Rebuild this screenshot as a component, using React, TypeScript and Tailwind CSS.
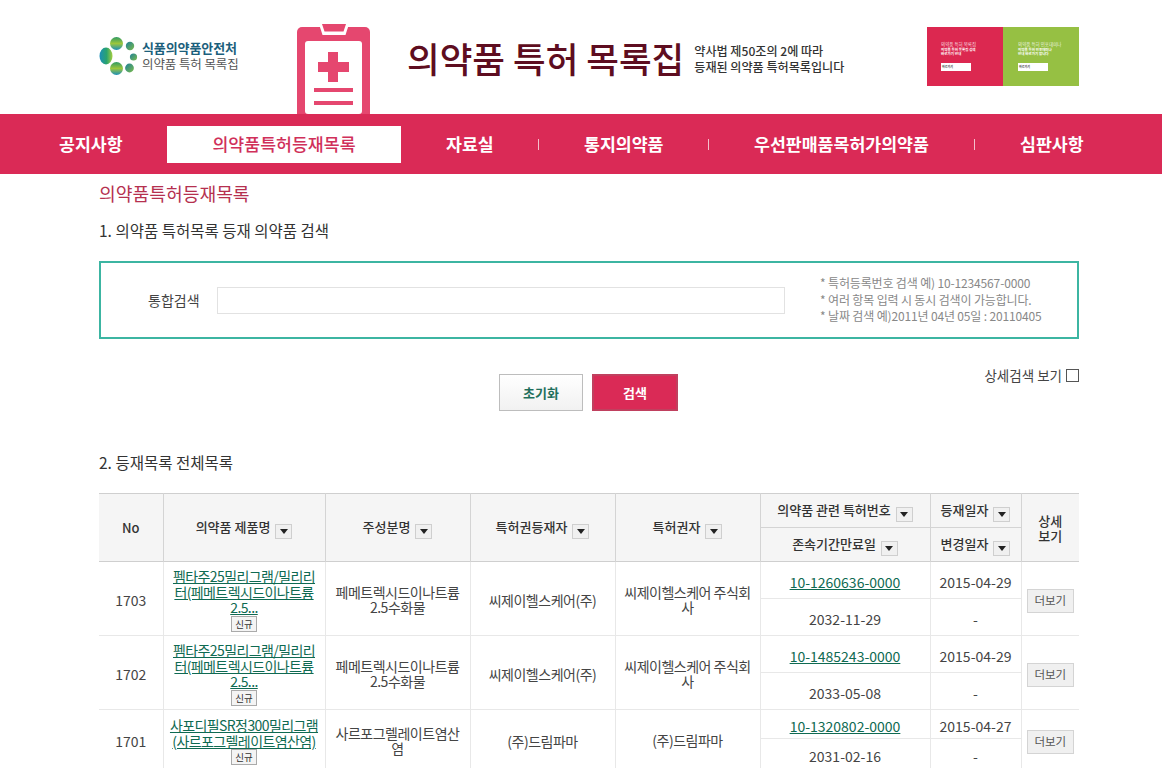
import { type ReactNode } from "react";

// Small square toggle used beside each sortable column title.
function SortBox() {
  return (
    <span className="ml-[5px] inline-flex h-[15px] w-[17px] items-center justify-center border border-[#cfcfcf] bg-[#f0f0f0] align-[-2px]">
      <svg width="8" height="5" viewBox="0 0 8 5" aria-hidden>
        <path d="M0 0h8L4 5z" fill="#222" />
      </svg>
    </span>
  );
}

function Logo() {
  return (
    <svg width="40" height="42" viewBox="0 0 40 42" aria-hidden className="shrink-0">
      <defs>
        <linearGradient id="lg1" x1="0" y1="0" x2="1" y2="0">
          <stop offset="0" stopColor="#1b8fb8" />
          <stop offset="0.55" stopColor="#2aa36d" />
          <stop offset="1" stopColor="#a6cf3f" />
        </linearGradient>
        <linearGradient id="lg2" x1="0" y1="0" x2="0" y2="1">
          <stop offset="0" stopColor="#2f9a63" />
          <stop offset="0.5" stopColor="#9cc63c" />
          <stop offset="1" stopColor="#1b8fb8" />
        </linearGradient>
        <linearGradient id="lg3" x1="0" y1="0" x2="1" y2="1">
          <stop offset="0" stopColor="#1d7f99" />
          <stop offset="1" stopColor="#7cbc4a" />
        </linearGradient>
      </defs>
      <ellipse cx="7" cy="20" rx="6.5" ry="8.5" fill="url(#lg1)" />
      <ellipse cx="17.5" cy="7.5" rx="6.5" ry="6.5" fill="url(#lg2)" />
      <ellipse cx="17.5" cy="32.5" rx="6.5" ry="6.5" fill="url(#lg2)" />
      <circle cx="31" cy="10" r="4.2" fill="url(#lg3)" />
      <circle cx="34.5" cy="21" r="3.6" fill="url(#lg3)" />
      <circle cx="30.5" cy="32" r="4.4" fill="url(#lg3)" />
    </svg>
  );
}

function Clipboard() {
  return (
    <svg width="73" height="90" viewBox="0 0 73 90" aria-hidden className="shrink-0">
      <path d="M5 3h63a5 5 0 0 1 5 5v82H0V8a5 5 0 0 1 5-5z" fill="#e5476f" />
      <path d="M22 0h30l-3.500 11H25.500z" fill="#fff" />
      <path d="M25 0h24l-2.500 7.500h-19z" fill="#e5476f" />
      <rect x="8" y="17" width="57" height="73" rx="3" fill="#fff" />
      <path d="M31 28h10v10h11v10H41v10H31V48H21V38h10z" fill="#e5476f" />
      <rect x="17" y="64" width="39" height="4" fill="#e5476f" />
      <rect x="17" y="77" width="39" height="4" fill="#e5476f" />
    </svg>
  );
}

function Banner() {
  return (
    <div className="flex h-[59px] w-[152px] shrink-0 text-white">
      <div className="h-full w-[76px] bg-[#dc2850] pl-[14px] pt-[14px]">
        <p className="text-[4.500px] leading-[6px] opacity-80 whitespace-nowrap">의약품 특허 목록집</p>
        <p className="mt-[1px] text-[3.500px] font-bold leading-[4px] whitespace-nowrap">의약품 특허 목록집 검색</p>
        <p className="text-[3.500px] font-bold leading-[4px] whitespace-nowrap">바로가기 안내</p>
        <div className="mt-[7px] flex h-[8px] w-[30px] items-center bg-white pl-[1px] text-[3px] font-bold text-[#444]">
          바로가기
        </div>
      </div>
      <div className="h-full w-[76px] bg-[#96c043] pl-[15px] pt-[14px]">
        <p className="text-[4.500px] leading-[6px] opacity-80 whitespace-nowrap">의약품 특허 인포데미나</p>
        <p className="mt-[1px] text-[3.500px] font-bold leading-[4px] whitespace-nowrap">의약품 특허 인포데미나</p>
        <p className="text-[3.500px] font-bold leading-[4px] whitespace-nowrap">안내 바로가기 합니다</p>
        <div className="mt-[7px] flex h-[8px] w-[30px] items-center bg-white pl-[1px] text-[3px] font-bold text-[#444]">
          바로가기
        </div>
      </div>
    </div>
  );
}

const navItems = [
  { label: "공지사항", w: "w-[153px]", sep: false },
  { label: "의약품특허등재목록", w: "w-[234px]", active: true, sep: false },
  { label: "자료실", w: "w-[138px]", sep: true },
  { label: "통지의약품", w: "w-[170px]", sep: true },
  { label: "우선판매품목허가의약품", w: "w-[266px]", sep: true },
  { label: "심판사항", w: "w-[140px]", sep: false },
];

function Nav() {
  return (
    <nav className="flex h-[60px] items-center bg-[#da2a56] pl-[14px]">
      {navItems.map((item) =>
        item.active ? (
          <div
            key={item.label}
            className={`${item.w} flex h-[37px] items-center justify-center bg-white text-[17.300px] font-medium text-[#d0305a]`}
          >
            {item.label}
          </div>
        ) : (
          <div
            key={item.label}
            className={`${item.w} flex h-[37px] items-center pl-[45px] text-[17.300px] font-bold whitespace-nowrap text-white ${
              item.sep ? "relative after:absolute after:right-0 after:top-[13px] after:h-[11px] after:w-px after:bg-white/70" : ""
            }`}
          >
            {item.label}
          </div>
        ),
      )}
    </nav>
  );
}

function Th({ children, className = "", ...rest }: { children: ReactNode; className?: string; rowSpan?: number }) {
  return (
    <th
      {...rest}
      className={`border-x border-[#d4d4d4] bg-[#f5f5f5] p-0 text-center align-middle text-[13px] font-medium text-[#333] first:border-l-0 last:border-r-0 ${className}`}
    >
      {children}
    </th>
  );
}

interface Row {
  no: number;
  name: string[];
  ingredient: string[];
  holder: string;
  owner: string[];
  patent: string;
  expiry: string;
  date: string;
  top: string;
  bottom: string;
}

const rows: Row[] = [
  {
    no: 1703,
    name: ["펨타주25밀리그램/밀리리", "터(페메트렉시드이나트륨", "2.5..."],
    ingredient: ["페메트렉시드이나트륨", "2.5수화물"],
    holder: "씨제이헬스케어(주)",
    owner: ["씨제이헬스케어 주식회", "사"],
    patent: "10-1260636-0000",
    expiry: "2032-11-29",
    date: "2015-04-29",
    top: "h-[37px]",
    bottom: "h-[37px]",
  },
  {
    no: 1702,
    name: ["펨타주25밀리그램/밀리리", "터(페메트렉시드이나트륨", "2.5..."],
    ingredient: ["페메트렉시드이나트륨", "2.5수화물"],
    holder: "씨제이헬스케어(주)",
    owner: ["씨제이헬스케어 주식회", "사"],
    patent: "10-1485243-0000",
    expiry: "2033-05-08",
    date: "2015-04-29",
    top: "h-[37px]",
    bottom: "h-[37px]",
  },
  {
    no: 1701,
    name: ["사포디필SR정300밀리그램", "(사르포그렐레이트염산염)"],
    ingredient: ["사르포그렐레이트염산", "염"],
    holder: "(주)드림파마",
    owner: ["(주)드림파마"],
    patent: "10-1320802-0000",
    expiry: "2031-02-16",
    date: "2015-04-27",
    top: "h-[29px]",
    bottom: "h-[31px]",
  },
];

const bodyCell = "border-x border-b border-[#e8e8e8] p-0 text-center align-middle";

function TableRows() {
  return (
    <>
      {rows.map((r) => (
        <tbody key={r.no} className="text-[14px] leading-[15.5px] text-[#444]">
          <tr className={r.top}>
            <td rowSpan={2} className={`${bodyCell} border-l-0 pt-[4px]`}>
              {r.no}
            </td>
            <td rowSpan={2} className={`${bodyCell} pt-[4px]`}>
              <a className="block tracking-[-0.6px] whitespace-nowrap text-[#0f6a52] underline underline-offset-1">
                {r.name.map((line) => (
                  <span key={line} className="block">
                    {line}
                  </span>
                ))}
              </a>
              <span className="mx-auto block h-[16px] w-[26px] border border-[#aaa] bg-[#f4f4f4] text-[9.500px] leading-[14px] text-[#333]">
                신규
              </span>
            </td>
            <td rowSpan={2} className={`${bodyCell} pt-[3px] tracking-[-0.5px]`}>
              {r.ingredient.map((line) => (
                <span key={line} className="block">
                  {line}
                </span>
              ))}
            </td>
            <td rowSpan={2} className={`${bodyCell} pt-[4px] tracking-[-0.5px]`}>
              {r.holder}
            </td>
            <td rowSpan={2} className={`${bodyCell} pt-[3px] tracking-[-0.5px]`}>
              {r.owner.map((line) => (
                <span key={line} className="block">
                  {line}
                </span>
              ))}
            </td>
            <td className={`${bodyCell} pt-[6px]`}>
              <a className="text-[#0f6a52] underline underline-offset-1">{r.patent}</a>
            </td>
            <td className={`${bodyCell} pt-[6px]`}>{r.date}</td>
            <td rowSpan={2} className={`${bodyCell} border-r-0 pt-[4px]`}>
              <button className="h-[24px] w-[47px] border border-[#d4d4d4] bg-[#f0f0f0] text-[11.500px] text-[#555]">
                더보기
              </button>
            </td>
          </tr>
          <tr className={r.bottom}>
            <td className={`${bodyCell} pt-[6px]`}>{r.expiry}</td>
            <td className={`${bodyCell} pt-[6px]`}>-</td>
          </tr>
        </tbody>
      ))}
    </>
  );
}

export default function App() {
  return (
    <div className="h-[768px] overflow-hidden bg-white font-['Noto_Sans_CJK_KR','Noto_Sans',sans-serif] text-[#333]">
      <header className="ml-[99px] flex h-[114px] w-[980px] items-start overflow-hidden">
        <div className="mt-[36px] flex w-[198px] items-start gap-[3px]">
          <Logo />
          <div className="w-[100px] pt-[4px] text-[13px] leading-[16px] tracking-[-0.1px]">
            <p className="font-bold whitespace-nowrap text-[#1c5f7c]">식품의약품안전처</p>
            <p className="text-[12.500px] whitespace-nowrap text-[#555]">의약품 특허 목록집</p>
          </div>
        </div>
        <div className="mt-[24px]">
          <Clipboard />
        </div>
        <h1 className="ml-[37px] mt-[33px] text-[35.500px] leading-[50px] font-medium whitespace-nowrap text-[#5e0d20]">
          의약품 특허 목록집
        </h1>
        <div className="ml-[10px] mt-[43px] text-[12.100px] leading-[16px] font-medium whitespace-nowrap text-[#333]">
          <p>약사법 제50조의 2에 따라</p>
          <p>등재된 의약품 특허목록입니다</p>
        </div>
        <div className="ml-auto mt-[27px] flex">
          <Banner />
        </div>
      </header>

      <Nav />

      <main className="ml-[99px] w-[980px]">
        <h2 className="mt-[6px] text-[18.200px] leading-[26px] font-normal text-[#b5304f]">의약품특허등재목록</h2>
        <h3 className="mt-[13px] text-[15.500px] leading-[22px] font-normal text-[#333]">
          1. 의약품 특허목록 등재 의약품 검색
        </h3>

        <section className="mt-[20px] flex h-[78px] items-center border-2 border-[#3cb5a2] pl-[47px]">
          <label className="w-[69px] text-[14px] text-[#444]">통합검색</label>
          <input className="h-[27px] w-[568px] border border-[#e2e2e2] bg-white" />
          <ul className="ml-[35px] text-[12px] leading-[16.500px] tracking-[-0.15px] whitespace-nowrap text-[#888]">
            <li>* 특허등록번호 검색 예) 10-1234567-0000</li>
            <li>* 여러 항목 입력 시 동시 검색이 가능합니다.</li>
            <li>* 날짜 검색 예)2011년 04년 05일 : 20110405</li>
          </ul>
        </section>

        <div className="relative mt-[35px] flex h-[37px] justify-center gap-[9px] pr-[1px]">
          <button className="h-[37px] w-[84px] border border-[#bdbdbd] bg-gradient-to-b from-white to-[#f1f1f1] text-[13px] font-bold text-[#1f6f5c]">
            초기화
          </button>
          <button className="h-[37px] w-[86px] border-2 border-[#c0405f] bg-[#da2a56] text-[13px] font-bold text-white">
            검색
          </button>
          <label className="absolute right-0 top-[-9px] flex items-center gap-[4px] text-[13.500px] text-[#444]">
            상세검색 보기
            <span className="h-[13px] w-[13px] border border-[#555] bg-white" />
          </label>
        </div>

        <h3 className="mt-[40px] text-[15.500px] leading-[22px] font-normal text-[#333]">2. 등재목록 전체목록</h3>

        <table className="mt-[20px] w-[980px] table-fixed border-collapse">
          <colgroup>
            <col className="w-[64px]" />
            <col className="w-[162px]" />
            <col className="w-[145px]" />
            <col className="w-[145px]" />
            <col className="w-[145px]" />
            <col className="w-[170px]" />
            <col className="w-[91px]" />
            <col className="w-[58px]" />
          </colgroup>
          <thead className="border-y border-[#cfcfcf]">
            <tr className="h-[34px]">
              <Th rowSpan={2} className="font-bold">
                No
              </Th>
              <Th rowSpan={2}>
                의약품 제품명
                <SortBox />
              </Th>
              <Th rowSpan={2}>
                주성분명
                <SortBox />
              </Th>
              <Th rowSpan={2}>
                특허권등재자
                <SortBox />
              </Th>
              <Th rowSpan={2}>
                특허권자
                <SortBox />
              </Th>
              <Th className="border-b border-b-[#d4d4d4]">
                의약품 관련 특허번호
                <SortBox />
              </Th>
              <Th className="border-b border-b-[#d4d4d4]">
                등재일자
                <SortBox />
              </Th>
              <Th rowSpan={2} className="leading-[15px]">
                상세
                <br />
                보기
              </Th>
            </tr>
            <tr className="h-[34px]">
              <Th>
                존속기간만료일
                <SortBox />
              </Th>
              <Th>
                변경일자
                <SortBox />
              </Th>
            </tr>
          </thead>
          <TableRows />
        </table>
      </main>
    </div>
  );
}
